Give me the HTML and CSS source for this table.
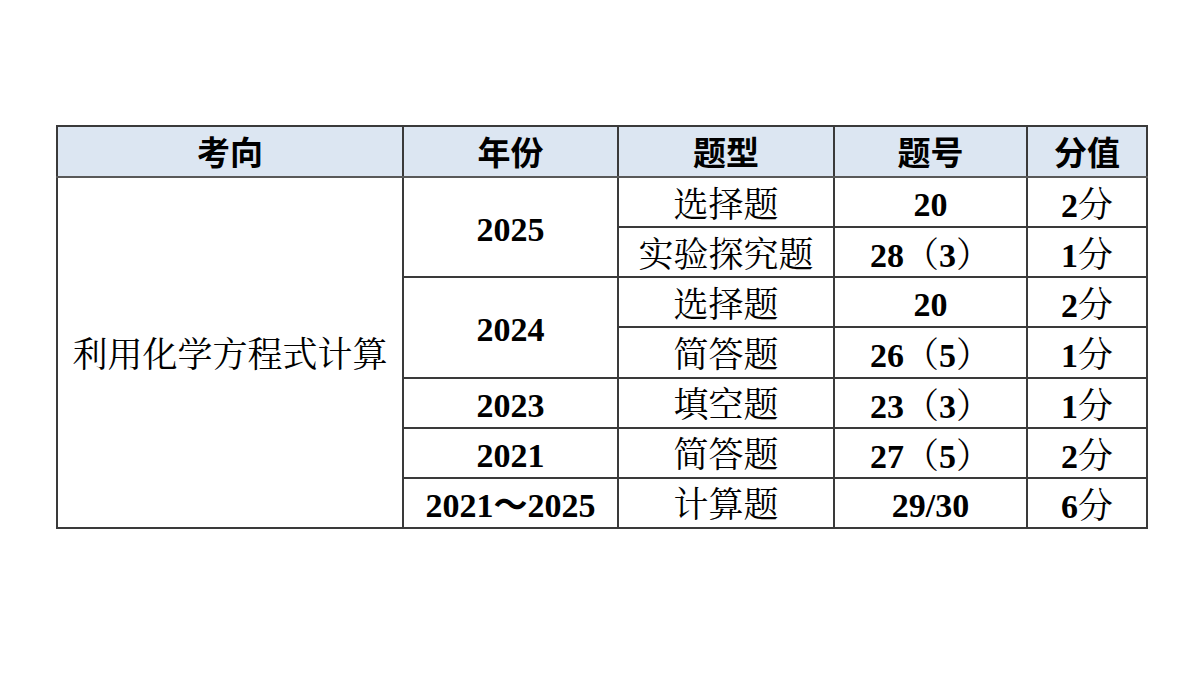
FILE: index.html
```html
<!DOCTYPE html>
<html lang="zh">
<head>
<meta charset="utf-8">
<link rel="stylesheet" href="styles.css">
</head>
<body>
<div class="page">
<table class="grid">
  <colgroup>
    <col class="c1"><col class="c2"><col class="c3"><col class="c4"><col class="c5">
  </colgroup>
  <thead>
    <tr class="head"><th>考向</th><th>年份</th><th>题型</th><th>题号</th><th>分值</th></tr>
  </thead>
  <tbody>
    <tr>
      <td rowspan="7" class="topic">利用化学方程式计算</td>
      <td rowspan="2" class="num">2025</td>
      <td class="cjk">选择题</td>
      <td class="num">20</td>
      <td class="mix"><b class="num">2</b><span class="cjk">分</span></td>
    </tr>
    <tr>
      <td class="cjk">实验探究题</td>
      <td class="mix"><b class="num">28</b><span class="cjk">（</span><b class="num">3</b><span class="cjk">）</span></td>
      <td class="mix"><b class="num">1</b><span class="cjk">分</span></td>
    </tr>
    <tr>
      <td rowspan="2" class="num">2024</td>
      <td class="cjk">选择题</td>
      <td class="num">20</td>
      <td class="mix"><b class="num">2</b><span class="cjk">分</span></td>
    </tr>
    <tr>
      <td class="cjk">简答题</td>
      <td class="mix"><b class="num">26</b><span class="cjk">（</span><b class="num">5</b><span class="cjk">）</span></td>
      <td class="mix"><b class="num">1</b><span class="cjk">分</span></td>
    </tr>
    <tr>
      <td class="num">2023</td>
      <td class="cjk">填空题</td>
      <td class="mix"><b class="num">23</b><span class="cjk">（</span><b class="num">3</b><span class="cjk">）</span></td>
      <td class="mix"><b class="num">1</b><span class="cjk">分</span></td>
    </tr>
    <tr>
      <td class="num">2021</td>
      <td class="cjk">简答题</td>
      <td class="mix"><b class="num">27</b><span class="cjk">（</span><b class="num">5</b><span class="cjk">）</span></td>
      <td class="mix"><b class="num">2</b><span class="cjk">分</span></td>
    </tr>
    <tr>
      <td class="num">2021～2025</td>
      <td class="cjk">计算题</td>
      <td class="num">29/30</td>
      <td class="mix"><b class="num">6</b><span class="cjk">分</span></td>
    </tr>
  </tbody>
</table>
</div>
</body>
</html>
```

FILE: styles.css
```css
html, body {
  margin: 0;
  padding: 0;
  background: #ffffff;
}
.page {
  padding: 125px 0 0 56px;
}
.grid {
  border-collapse: collapse;
  table-layout: fixed;
  width: 1090px;
  height: 404px;
  border: 2px solid #6b6b6b;
  color: #000;
}
.c1 { width: 346px; }
.c2 { width: 215px; }
.c3 { width: 216px; }
.c4 { width: 193px; }
.c5 { width: 120px; }
.grid th,
.grid td {
  border: 2px solid #3a3a3a;
  text-align: center;
  vertical-align: middle;
  padding: 0;
  line-height: 1;
  white-space: nowrap;
}
.head {
  height: 51px;
  background: #dce6f2;
}
.head th {
  font-family: "Noto Sans CJK SC", sans-serif;
  font-weight: 700;
  font-size: 33px;
  border-bottom-color: #595959;
}
.cjk,
.topic {
  font-family: "Noto Serif CJK SC", "Noto Sans CJK SC", serif;
  font-weight: 400;
  font-size: 35px;
}
.num {
  font-family: "Liberation Serif", "Noto Sans CJK SC", serif;
  font-weight: 700;
  font-size: 34px;
}
td.num {
  font-weight: 700;
  padding-top: 6px;
}
td.mix {
  padding-top: 4px;
}
```
